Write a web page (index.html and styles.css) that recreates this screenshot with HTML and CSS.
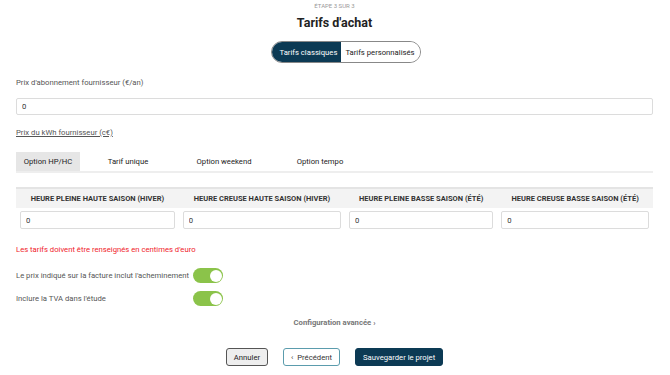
FILE: index.html
```html
<!DOCTYPE html>
<html lang="fr">
<head>
  <meta charset="UTF-8" />
  <meta name="viewport" content="width=device-width, initial-scale=1.0" />
  <title>Tarifs d'achat</title>
  <link rel="stylesheet" href="styles.css">
</head>
<body>
  <div class="page">
    <!-- En-tête -->
    <div class="step">ÉTAPE 3 SUR 3</div>
    <h1>Tarifs d'achat</h1>
    <div class="switch-row">
      <div class="switch-group">
        <button class="switch active">Tarifs classiques</button>
        <button class="switch">Tarifs personnalisés</button>
      </div>
    </div>

    <label class="field-label">Prix d'abonnement fournisseur (€/an)</label>
    <input class="field" type="text" value="0">

    <div class="field-label underline">Prix du kWh fournisseur (c€)</div>

    <!-- Onglets -->
    <div class="tabs">
      <div class="tab active">Option HP/HC</div>
      <div class="tab">Tarif unique</div>
      <div class="tab">Option weekend</div>
      <div class="tab">Option tempo</div>
    </div>

    <table class="prices">
      <thead>
        <tr>
          <th>Heure pleine haute saison (hiver)</th>
          <th>Heure creuse haute saison (hiver)</th>
          <th>Heure pleine basse saison (été)</th>
          <th>Heure creuse basse saison (été)</th>
        </tr>
      </thead>
      <tbody>
        <tr>
          <td><input class="field" type="text" value="0"></td>
          <td><input class="field" type="text" value="0"></td>
          <td><input class="field" type="text" value="0"></td>
          <td><input class="field" type="text" value="0"></td>
        </tr>
      </tbody>
    </table>

    <p class="warning">Les tarifs doivent être renseignés en centimes d'euro</p>

    <div class="options">
      <span>Le prix indiqué sur la facture inclut l'acheminement</span>
      <span class="toggle on"></span>
      <span>Inclure la TVA dans l'étude</span>
      <span class="toggle on"></span>
    </div>

    <div class="advanced">Configuration avancée ›</div>

    <!-- Actions -->
    <div class="actions">
      <button class="btn btn-cancel">Annuler</button>
      <button class="btn btn-prev">‹&nbsp; Précédent</button>
      <button class="btn btn-save">Sauvegarder le projet</button>
    </div>
  </div>
</body>
</html>
```

FILE: styles.css
```css
:root {
  --navy: #0c3a54;
  --text: #555;
  --border: #dcdcdc;
  --green: #8bc34a;
}

* {
  box-sizing: border-box;
  margin: 0;
  padding: 0;
  font-family: Roboto, "Liberation Sans", sans-serif;
}

body {
  background: #fff;
  color: var(--text);
  font-size: 7.7px;
}

.page {
  padding: 2px 17px 0 16px;
}

.step {
  text-align: center;
  font-size: 6px;
  line-height: 8px;
  color: #999;
}

h1 {
  text-align: center;
  margin-top: 5px;
  font-size: 12.5px;
  line-height: 16px;
  color: #222;
}

.switch-row {
  display: flex;
  justify-content: center;
  padding-left: 23px;
  margin-top: 10px;
}

.switch-group {
  display: flex;
  height: 22px;
  border: 1px solid #888;
  border-radius: 11px;
  overflow: hidden;
}

.switch {
  border: none;
  background: #fff;
  color: #222;
  font-size: 7.7px;
  padding: 0 5px 0 4px;
}

.switch.active {
  background: var(--navy);
  color: #fff;
  padding: 0 4px 0 7px;
}

.field-label {
  display: block;
  margin-top: 15px;
  line-height: 10px;
  color: var(--text);
}

.underline {
  text-decoration: underline;
  margin-top: 13px;
}

.field {
  display: block;
  width: 100%;
  height: 17px;
  margin-top: 10px;
  border: 1px solid var(--border);
  border-radius: 2px;
  padding: 0 5px;
  font-size: 7.7px;
  color: #333;
  background: #fff;
}

.tabs {
  display: flex;
  margin-top: 14px;
  border-bottom: 2px solid #eee;
}

.tab {
  width: 96px;
  height: 19px;
  line-height: 19px;
  text-align: center;
  color: #222;
}

.tab:first-child {
  width: 64px;
}

.tab.active {
  background: #e6e6e6;
}

.prices {
  width: 100%;
  margin-top: 14px;
  border-collapse: collapse;
}

.prices th {
  height: 20px;
  background: #f3f3f3;
  border-top: 2px solid #e4e4e4;
  font-size: 7.5px;
  text-transform: uppercase;
  color: #333;
  font-weight: 700;
  padding: 0 4px;
}

.prices td {
  padding: 3px 4px;
}

.prices td .field {
  margin-top: 0;
  height: 18px;
}

.warning {
  margin-top: 13px;
  color: #f0222a;
  line-height: 10px;
}

.options {
  display: grid;
  grid-template-columns: 177px 30px;
  row-gap: 8px;
  align-items: center;
  margin-top: 13px;
}

.toggle {
  position: relative;
  width: 30px;
  height: 15px;
  border-radius: 8px;
  background: #ccc;
}

.toggle.on {
  background: var(--green);
}

.toggle::after {
  content: "";
  position: absolute;
  top: 1.5px;
  left: 1.5px;
  width: 12px;
  height: 12px;
  border-radius: 50%;
  background: #fff;
}

.toggle.on::after {
  left: 16.5px;
}

.advanced {
  text-align: center;
  margin-top: 12px;
  line-height: 10px;
  font-weight: 700;
  color: #777;
}

.actions {
  display: flex;
  justify-content: center;
  gap: 15px;
  margin-top: 20px;
}

.btn {
  height: 18px;
  padding: 0 7px;
  font-size: 7.7px;
  border-radius: 3px;
  cursor: pointer;
}

.btn-cancel {
  background: #eee;
  border: 1px solid #555;
  color: #222;
}

.btn-prev {
  background: #fff;
  border: 1px solid #5b9cad;
  color: #333;
}

.btn-save {
  background: var(--navy);
  border: 1px solid var(--navy);
  color: #fff;
}
```
